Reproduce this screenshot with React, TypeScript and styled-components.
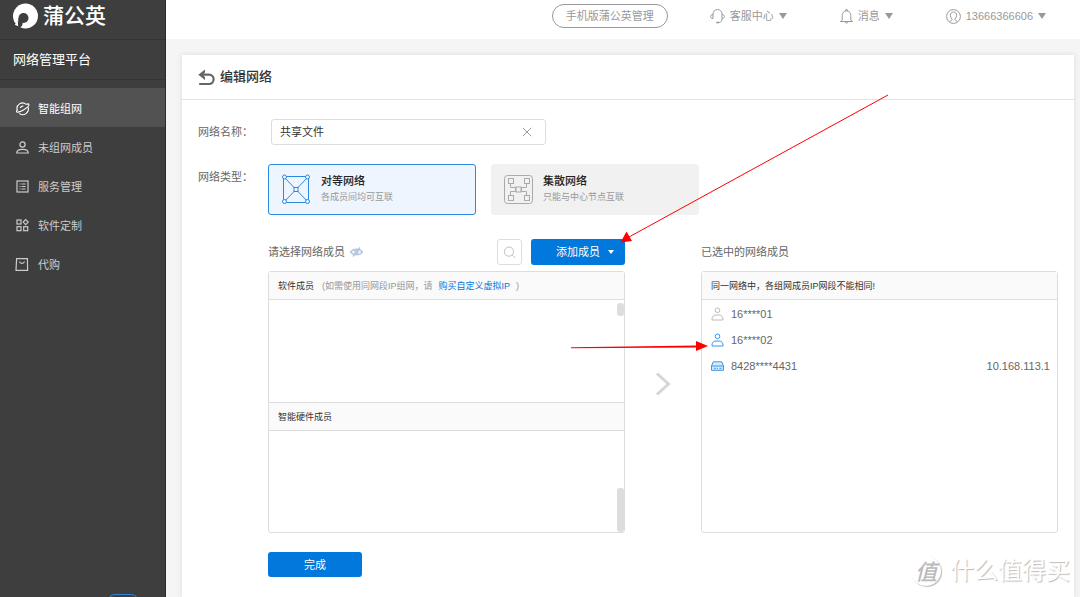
import React, { useState } from 'react';
import styled, { createGlobalStyle, css } from 'styled-components';

const Global = createGlobalStyle`
  *, *::before, *::after { box-sizing: border-box; }
  body {
    margin: 0;
    background: #f5f5f5;
    color: #666;
    font: 11px/16px "Liberation Sans", "Noto Sans CJK SC", sans-serif;
  }
  button, input { font: inherit; }
  button { padding: 0; border: 0; background: none; color: inherit; cursor: pointer; }
  a { text-decoration: none; }
  svg { display: block; flex: none; }
`;

const Page = styled.div`
  position: relative;
  display: grid;
  grid-template-columns: 166px minmax(0, 1fr);
  min-height: 100vh;
  overflow: hidden;
`;

/* ---------- sidebar ---------- */

const Sidebar = styled.aside`
  display: flex;
  flex-direction: column;
  background: #3e3e3e;
  border-right: 1px solid #2c2c2c;
`;

const Brand = styled.a`
  display: flex;
  align-items: center;
  gap: 4px;
  height: 40px;
  padding: 0 0 7px 13px;
  border-bottom: 1px solid #353535;
  color: #fff;
  font-size: 21px;
  font-weight: 500;
  line-height: 32px;
`;

const PlatformTitle = styled.h1`
  margin: 0 0 8px;
  padding: 0 13px;
  border-bottom: 1px solid #353535;
  color: #fff;
  font-size: 13px;
  font-weight: 400;
  line-height: 39px;
`;

const Nav = styled.nav`
  display: flex;
  flex-direction: column;
`;

const NavItem = styled.a<{ $active?: boolean }>`
  display: flex;
  align-items: center;
  gap: 8px;
  height: 39px;
  padding: 2px 0 0 15px;
  color: ${p => (p.$active ? '#fff' : '#ccc')};
  background: ${p => (p.$active ? '#525252' : 'transparent')};
`;

const SidebarFoot = styled.div`
  height: 3px;
  margin: auto 0 0 107px;
  overflow: hidden;
`;

const FootTab = styled.button`
  display: block;
  width: 32px;
  height: 16px;
  border: 1px solid #2f86d8;
  border-radius: 8px;
`;

/* ---------- top bar ---------- */

const Main = styled.div`
  display: flex;
  flex-direction: column;
  min-width: 0;
`;

const TopBar = styled.header`
  display: flex;
  align-items: center;
  justify-content: flex-end;
  gap: 53px;
  height: 39px;
  padding: 0 34px 7px 16px;
  background: #fff;
  color: #999;
`;

const Pill = styled.button`
  width: 116px;
  height: 24px;
  margin-right: -11px;
  border: 1px solid #999;
  border-radius: 12px;
`;

const TopMenu = styled.button`
  display: flex;
  align-items: center;
  gap: 5px;
`;

const Caret = styled.span<{ $small?: boolean }>`
  border: solid transparent;
  border-top-color: currentColor;
  border-width: ${p => (p.$small ? '4px 3px 0' : '6px 4px 0')};
`;

/* ---------- card ---------- */

const Card = styled.main`
  flex: 1;
  margin: 16px 6px 0 16px;
  background: #fff;
  box-shadow: 0 0 6px rgba(0, 0, 0, 0.1);
`;

const CardHead = styled.header`
  display: flex;
  align-items: center;
  gap: 5px;
  height: 45px;
  padding: 0 16px;
  border-bottom: 1px solid #e4e4e4;
`;

const CardTitle = styled.h2`
  margin: 0;
  color: #333;
  font-size: 13px;
  font-weight: 500;
  line-height: 20px;
`;

const Form = styled.form`
  display: grid;
  grid-template-columns: 70px minmax(0, 1fr);
  row-gap: 19px;
  padding: 19px 16px 20px;
`;

const Label = styled.label`
  line-height: 26px;
`;

const NameBox = styled.div`
  display: flex;
  align-items: center;
  width: 275px;
  height: 26px;
  margin-left: 3px;
  padding-right: 13px;
  border: 1px solid #ddd;
  border-radius: 3px;
  color: #999;
`;

const NameInput = styled.input`
  flex: 1;
  min-width: 0;
  padding: 0 8px;
  border: 0;
  outline: 0;
  background: none;
  color: #333;
`;

const Types = styled.div`
  display: flex;
  gap: 15px;
`;

const TypeCard = styled.label<{ $on: boolean }>`
  display: flex;
  align-items: center;
  gap: 10px;
  width: 208px;
  height: 51px;
  padding: 0 0 2px 12px;
  border: 1px solid ${p => (p.$on ? '#2a8ae0' : '#f1f1f1')};
  border-radius: 3px;
  background: ${p => (p.$on ? '#eef5fe' : '#f1f1f1')};
  cursor: pointer;
`;

const HiddenRadio = styled.input`
  position: absolute;
  opacity: 0;
  pointer-events: none;
`;

const TypeText = styled.span`
  display: flex;
  flex-direction: column;
  color: #999;
  font-size: 9px;
`;

const TypeName = styled.strong`
  color: #222;
  font-size: 11px;
  font-weight: 500;
`;

const Transfer = styled.div`
  grid-column: 2;
  display: grid;
  grid-template-columns: minmax(0, 1fr) 76px minmax(0, 1fr);
  padding-top: 5px;
`;

const Column = styled.section`
  display: flex;
  flex-direction: column;
  gap: 6px;
`;

const Tools = styled.div`
  display: flex;
  align-items: center;
  gap: 9px;
  height: 26px;
`;

const ToolsTitle = styled.span`
  display: flex;
  align-items: center;
  gap: 5px;
  margin-right: auto;
`;

const SearchButton = styled.button`
  display: grid;
  place-items: center;
  width: 25px;
  height: 26px;
  border: 1px solid #ddd;
  border-radius: 3px;
`;

const primary = css`
  width: 94px;
  border-radius: 3px;
  background: #0078dc;
  color: #fff;
`;

const AddButton = styled.button`
  ${primary}
  display: flex;
  align-items: center;
  gap: 8px;
  height: 26px;
  padding-left: 25px;
`;

const DoneButton = styled.button`
  ${primary}
  grid-column: 2;
  height: 25px;
`;

const Panel = styled.div`
  display: flex;
  flex-direction: column;
  height: 262px;
  border: 1px solid #ddd;
  border-radius: 3px;
`;

const PanelHead = styled.div<{ $divided?: boolean }>`
  display: flex;
  gap: 8px;
  padding: 2px 9px 0;
  border-top: ${p => (p.$divided ? '1px solid #ddd' : '0')};
  border-bottom: 1px solid #ddd;
  background: #fafafa;
  color: #333;
  font-size: 9px;
  line-height: 25px;
`;

const Hint = styled.span`
  display: flex;
  gap: 6px;
  color: #999;
`;

const BuyLink = styled.a`
  color: #0078dc;
`;

const PanelBody = styled.div`
  display: flex;
  flex: 1;
  justify-content: flex-end;
`;

const Thumb = styled.span<{ $end?: boolean }>`
  width: 7px;
  height: ${p => (p.$end ? '44px' : '13px')};
  margin-top: 3px;
  align-self: ${p => (p.$end ? 'flex-end' : 'flex-start')};
  border-radius: 3px;
  background: #ddd;
`;

const Between = styled.div`
  display: flex;
  justify-content: center;
  padding-top: 132px;
`;

const Members = styled.ul`
  margin: 0;
  padding: 1px 7px 0 9px;
  list-style: none;
`;

const Member = styled.li`
  display: flex;
  align-items: center;
  gap: 7px;
  height: 26px;
`;

const Address = styled.span`
  margin-left: auto;
`;

/* ---------- overlays ---------- */

const Arrows = styled.svg`
  position: absolute;
  top: 0;
  left: 0;
  pointer-events: none;
`;

const Watermark = styled.div`
  position: absolute;
  right: 10px;
  bottom: 9px;
  display: flex;
  align-items: center;
  gap: 9px;
  color: #fff;
  font-size: 24px;
  line-height: 34px;
  text-shadow: 1px 1px 1px #bbb;
  pointer-events: none;
`;

const Seal = styled.span`
  display: grid;
  place-items: center;
  width: 30px;
  height: 30px;
  border-radius: 50%;
  box-shadow: 1px 1px 1px #bbb;
  color: #bbb;
  font-size: 22px;
  font-style: italic;
  font-weight: 500;
  text-shadow: none;
`;

/* ---------- icons ---------- */

const line = { fill: 'none', stroke: 'currentColor' } as const;

const LogoIcon = () => (
  <svg width="26" height="26" viewBox="0 0 26 26">
    <circle cx="12.500" cy="13" r="12.500" fill="#fff" />
    <circle cx="10.500" cy="15" r="5" fill="#3e3e3e" />
    <path d="M5.500 15 9.800 19.900Q9.800 22.600 7 24.500L6 26 1.800 21.500Q5.300 19.500 5.500 15Z" fill="#3e3e3e" />
    <path d="M5.600 16.500Q4.600 19.500 5.200 23.300L0 21 1 15Z" fill="#fff" clipPath="circle(12.5px at 12.5px 13px)" />
  </svg>
);

const PlanetIcon = () => (
  <svg width="15" height="15" viewBox="0 0 15 15" {...line} strokeWidth="1.100">
    <path d="M13 6.200A5.500 5.500 0 0 1 4.300 12.300M2.300 9.200A5.500 5.500 0 0 1 11.200 3.400" />
    <path d="M11.200 3.400C12.700 2.700 13.700 2.700 13.900 3.300c.4 1.200-2.200 3.700-5.500 5.600S2 11.700 1.500 10.800c-.3-.5.2-1.300 1.100-2.200" />
    <path d="M5 6.900Q6.200 5.200 8.300 4.900" />
  </svg>
);

const PersonIcon = () => (
  <svg width="15" height="15" viewBox="0 0 15 15" {...line} strokeWidth="1.200">
    <circle cx="7.500" cy="4.500" r="2.600" />
    <path d="M1.700 13c0-2.400 1.900-3.700 5.800-3.700s5.800 1.300 5.800 3.700z" />
  </svg>
);

const ListIcon = () => (
  <svg width="15" height="15" viewBox="0 0 15 15" {...line} strokeWidth="1.200">
    <rect x="2" y="2" width="11" height="11" />
    <path d="M4.500 5h1M6.500 5h4M4.500 7.500h1M6.500 7.500h4M4.500 10h1M6.500 10h4" />
  </svg>
);

const BlocksIcon = () => (
  <svg width="15" height="15" viewBox="0 0 15 15" {...line} strokeWidth="1.200">
    <rect x="2" y="2" width="4" height="4" />
    <rect x="2" y="8.700" width="4" height="4" />
    <rect x="8.700" y="8.700" width="4" height="4" />
    <path d="m10.700 1.600 2.500 2.500-2.500 2.500-2.500-2.500z" />
  </svg>
);

const BagIcon = () => (
  <svg width="15" height="15" viewBox="0 0 15 15" {...line} strokeWidth="1.200">
    <path d="M1.600 1.600h10.800l.2 11.800H1z" />
    <path d="M4.500 4.500c.5 2.400 4.500 2.400 5 0" />
  </svg>
);

const HeadsetIcon = () => (
  <svg width="15" height="16" viewBox="0 0 15 16" {...line} strokeWidth="1">
    <path d="M3 10.500V6a4.500 4.500 0 0 1 9 0v4.500M3 6.500C1.300 6.800.6 7.400.6 8.500s.7 1.800 2.400 2M12 6.500c1.700.3 2.400.9 2.400 2s-.7 1.800-2.400 2c0 2.300-1 3.800-2.800 4" />
    <path d="M6.300 14.500h2.900" strokeWidth="1.600" />
  </svg>
);

const BellIcon = () => (
  <svg width="13" height="15" viewBox="0 0 13 15" {...line} strokeWidth="1">
    <path d="M.3 12.500h12.400M2.200 11V6.500C2.200 3.700 4 1.900 6.500 1.900s4.300 1.800 4.300 4.600V11l1.500 1.500M2.200 11 .7 12.500M5.700 1.900V.7h1.600v1.200M4.800 12.800c.3 1.700 3.100 1.700 3.400 0" />
  </svg>
);

const UserIcon = () => (
  <svg width="15" height="15" viewBox="0 0 15 15" {...line} strokeWidth="1">
    <circle cx="7.500" cy="7.500" r="6.900" />
    <path d="M3.800 12.600c.4-1 2.200-.9 2.300-1.900.1-1.100-1.700-2-1.700-4.200C4.400 4.300 5.600 3 7.500 3s3.100 1.300 3.100 3.500c0 2.200-1.800 3.100-1.700 4.200.1 1 1.900.9 2.300 1.900" />
  </svg>
);

const BackIcon = () => (
  <svg width="17" height="17" viewBox="0 0 17 17">
    <path d="M1.200 15h9.800a4.600 4.600 0 0 0 0-9.300H4" fill="none" stroke="#666" strokeWidth="2.200" />
    <path d="M.3 5.700 7 .4v3.100L4.500 5.700 7 7.900V11z" fill="#666" />
  </svg>
);

const ClearIcon = () => (
  <svg width="10" height="10" viewBox="0 0 10 10" {...line}>
    <path d="m.8.8 8.400 8.400M9.200.8.800 9.200" />
  </svg>
);

const MeshIcon = () => (
  <svg width="30" height="32" viewBox="0 0 30 32" fill="#eef5fe" stroke="#2a8ae0">
    <path d="M2.500 3.500h25v26h-25zM2.500 3.500l25 26M27.500 3.500l-25 26" />
    <circle cx="3.500" cy="4" r="2" />
    <circle cx="26.500" cy="4" r="2" />
    <circle cx="3.500" cy="28.500" r="2" />
    <circle cx="26.500" cy="28.500" r="2" />
    <rect x="13" y="14.500" width="4" height="4" />
  </svg>
);

const HubIcon = () => (
  <svg width="29" height="30" viewBox="0 0 29 30" fill="#f1f1f1" stroke="#aaa">
    <rect x=".5" y="1.500" width="28" height="28" rx="3" />
    <path d="M6.500 9v4.500h5v4h-5v4M22.500 9v4.500h-5v4h5v4" fill="none" />
    <rect x="4.500" y="4.500" width="5" height="5" />
    <rect x="20.500" y="4.500" width="5" height="5" />
    <rect x="4.500" y="21.500" width="5" height="5" />
    <rect x="20.500" y="21.500" width="5" height="5" />
    <rect x="12" y="13" width="5" height="5" />
  </svg>
);

const EyeIcon = () => (
  <svg width="13" height="10" viewBox="0 0 13 10" fill="none" stroke="#b4c3da" strokeWidth="1.300">
    <path d="M.6 5C3.500 1.300 9.500 1.300 12.400 5 9.500 8.700 3.500 8.700.6 5z" />
    <circle cx="6.500" cy="5" r="1.700" />
    <path d="M3 9.500 10 .5" />
  </svg>
);

const SearchIcon = () => (
  <svg width="13" height="13" viewBox="0 0 13 13" fill="none" stroke="#b9c2cf">
    <circle cx="6" cy="5.600" r="4.600" />
    <path d="m9.200 9 3 3" />
  </svg>
);

const MemberIcon = ({ color }: { color: string }) => (
  <svg width="13" height="14" viewBox="0 0 13 14" fill="none" stroke={color}>
    <circle cx="6.500" cy="3.300" r="2.300" />
    <path d="M1 13c-.3-3.300 1.500-5 4-5h3c2.500 0 4.300 1.700 4 5z" />
  </svg>
);

const RouterIcon = () => (
  <svg width="13" height="10" viewBox="0 0 13 10" fill="#d6eafc" stroke="#3a97e8">
    <path d="M.5 5 2.200.8h8.600L12.500 5v4.300H.5zM.5 5h12" />
    <path d="M3 7.300h2M6 7.300h1M8.500 7.300h2" />
  </svg>
);

const ChevronIcon = () => (
  <svg width="16" height="26" viewBox="0 0 16 26" fill="none" stroke="#d6d6d6" strokeWidth="3">
    <path d="m2 2.500 11.500 10.500L2 23.500" />
  </svg>
);

/* ---------- page ---------- */

const navItems = [
  { text: '智能组网', icon: <PlanetIcon />, active: true },
  { text: '未组网成员', icon: <PersonIcon /> },
  { text: '服务管理', icon: <ListIcon /> },
  { text: '软件定制', icon: <BlocksIcon /> },
  { text: '代购', icon: <BagIcon /> },
];

const topMenus = [
  { text: '客服中心', icon: <HeadsetIcon /> },
  { text: '消息', icon: <BellIcon /> },
  { text: '13666366606', icon: <UserIcon /> },
];

const networkTypes = [
  { id: 'mesh', name: '对等网络', note: '各成员间均可互联', icon: <MeshIcon /> },
  { id: 'hub', name: '集散网络', note: '只能与中心节点互联', icon: <HubIcon /> },
];

const members = [
  { name: '16****01', icon: <MemberIcon color="#bbb" /> },
  { name: '16****02', icon: <MemberIcon color="#3a97e8" /> },
  { name: '8428****4431', icon: <RouterIcon />, address: '10.168.113.1' },
];

export default function App() {
  const [name, setName] = useState('共享文件');
  const [type, setType] = useState('mesh');

  return (
    <>
      <Global />
      <Page>
        <Sidebar>
          <Brand href="#"><LogoIcon />蒲公英</Brand>
          <PlatformTitle>网络管理平台</PlatformTitle>
          <Nav>
            {navItems.map(item => (
              <NavItem key={item.text} href="#" $active={item.active}>
                {item.icon}{item.text}
              </NavItem>
            ))}
          </Nav>
          <SidebarFoot><FootTab type="button" aria-label="展开" /></SidebarFoot>
        </Sidebar>

        <Main>
          <TopBar>
            <Pill type="button">手机版蒲公英管理</Pill>
            {topMenus.map(menu => (
              <TopMenu key={menu.text} type="button">
                {menu.icon}{menu.text}<Caret />
              </TopMenu>
            ))}
          </TopBar>

          <Card>
            <CardHead>
              <button type="button" aria-label="返回"><BackIcon /></button>
              <CardTitle>编辑网络</CardTitle>
            </CardHead>

            <Form onSubmit={e => e.preventDefault()}>
              <Label htmlFor="network-name">网络名称：</Label>
              <NameBox>
                <NameInput id="network-name" value={name} onChange={e => setName(e.target.value)} />
                <button type="button" aria-label="清空" onClick={() => setName('')}><ClearIcon /></button>
              </NameBox>

              <Label as="span" id="type-label">网络类型：</Label>
              <Types role="radiogroup" aria-labelledby="type-label">
                {networkTypes.map(t => (
                  <TypeCard key={t.id} $on={type === t.id}>
                    <HiddenRadio
                      type="radio"
                      name="network-type"
                      checked={type === t.id}
                      onChange={() => setType(t.id)}
                    />
                    {t.icon}
                    <TypeText>
                      <TypeName>{t.name}</TypeName>
                      {t.note}
                    </TypeText>
                  </TypeCard>
                ))}
              </Types>

              <Transfer>
                <Column>
                  <Tools>
                    <ToolsTitle>请选择网络成员<EyeIcon /></ToolsTitle>
                    <SearchButton type="button" aria-label="搜索"><SearchIcon /></SearchButton>
                    <AddButton type="button">添加成员<Caret $small /></AddButton>
                  </Tools>
                  <Panel>
                    <PanelHead>
                      软件成员
                      <Hint>
                        <span>(如需使用同网段IP组网，请</span>
                        <BuyLink href="#">购买自定义虚拟IP</BuyLink>
                        <span>)</span>
                      </Hint>
                    </PanelHead>
                    <PanelBody><Thumb /></PanelBody>
                    <PanelHead $divided>智能硬件成员</PanelHead>
                    <PanelBody><Thumb $end /></PanelBody>
                  </Panel>
                </Column>

                <Between><ChevronIcon /></Between>

                <Column>
                  <Tools><ToolsTitle>已选中的网络成员</ToolsTitle></Tools>
                  <Panel>
                    <PanelHead>同一网络中，各组网成员IP网段不能相同!</PanelHead>
                    <Members>
                      {members.map(m => (
                        <Member key={m.name}>
                          {m.icon}{m.name}
                          {m.address && <Address>{m.address}</Address>}
                        </Member>
                      ))}
                    </Members>
                  </Panel>
                </Column>
              </Transfer>

              <DoneButton type="submit">完成</DoneButton>
            </Form>
          </Card>
        </Main>

        <Arrows width="1080" height="597" viewBox="0 0 1080 597" aria-hidden="true">
          <path d="M888 95 629 237" stroke="#ff0000" />
          <path d="M571 347.200 697 345.600V347.400L571 348.200Z" fill="#ff0000" />
          <path d="m620.500 242.500 6-11 5.500 9.500zM708 346l-12-5v10z" fill="#ff0000" />
        </Arrows>

        <Watermark><Seal>值</Seal>什么值得买</Watermark>
      </Page>
    </>
  );
}
